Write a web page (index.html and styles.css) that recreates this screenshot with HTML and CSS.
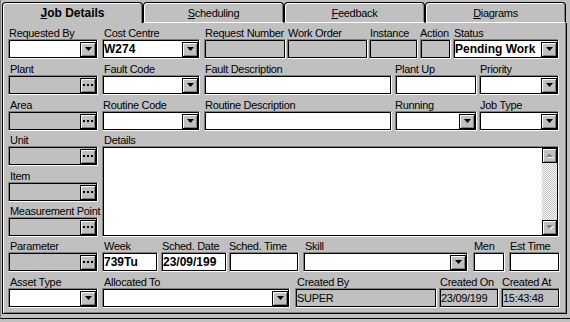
FILE: index.html
```html
<!DOCTYPE html>
<html lang="en">
<head>
  <meta charset="UTF-8" />
  <title>Job Details</title>
  <link rel="stylesheet" href="styles.css">
</head>
<body>
  <div class="frame">
    <div class="tabs">
      <div class="tab active"><u>J</u>ob Details</div>
      <div class="tab"><u>S</u>cheduling</div>
      <div class="tab"><u>F</u>eedback</div>
      <div class="tab"><u>D</u>iagrams</div>
    </div>

    <div class="panel">
      <!-- row 1 -->
      <div class="row r1">
        <div class="cell w90"><label>Requested By</label>
          <div class="fld"><span class="txt"></span><span class="btn"><svg width="7" height="4"><polygon points="0,0 7,0 3.5,4"/></svg></span></div>
        </div>
        <div class="cell w98 g4"><label class="in2">Cost Centre</label>
          <div class="fld"><span class="txt b">W274</span><span class="btn"><svg width="7" height="4"><polygon points="0,0 7,0 3.5,4"/></svg></span></div>
        </div>
        <div class="cell w82 g4"><label>Request Number</label><div class="fld ro"></div></div>
        <div class="cell w81 g1"><label>Work Order</label><div class="fld ro"></div></div>
        <div class="cell w49 g1"><label>Instance</label><div class="fld ro"></div></div>
        <div class="cell w31 g2"><label class="in0">Action</label><div class="fld ro"></div></div>
        <div class="cell w106 g2"><label>Status</label>
          <div class="fld"><span class="txt b">Pending Work</span><span class="btn"><svg width="7" height="4"><polygon points="0,0 7,0 3.5,4"/></svg></span></div>
        </div>
      </div>

      <!-- row 2 -->
      <div class="row r2">
        <div class="cell w90"><label class="in2">Plant</label>
          <div class="fld ro"><span class="txt"></span><span class="btn"><svg width="10" height="2"><rect x="0" width="2" height="2"/><rect x="4" width="2" height="2"/><rect x="8" width="2" height="2"/></svg></span></div>
        </div>
        <div class="cell w98 g4"><label class="in2">Fault Code</label>
          <div class="fld"><span class="txt"></span><span class="btn"><svg width="7" height="4"><polygon points="0,0 7,0 3.5,4"/></svg></span></div>
        </div>
        <div class="cell w188 g4"><label>Fault Description</label><div class="fld"></div></div>
        <div class="cell w82 g3"><label class="in0">Plant Up</label><div class="fld"></div></div>
        <div class="cell w80 g2"><label>Priority</label>
          <div class="fld"><span class="txt"></span><span class="btn"><svg width="7" height="4"><polygon points="0,0 7,0 3.5,4"/></svg></span></div>
        </div>
      </div>

      <!-- row 3 -->
      <div class="row r3">
        <div class="cell w90"><label class="in2">Area</label>
          <div class="fld ro"><span class="txt"></span><span class="btn"><svg width="10" height="2"><rect x="0" width="2" height="2"/><rect x="4" width="2" height="2"/><rect x="8" width="2" height="2"/></svg></span></div>
        </div>
        <div class="cell w98 g4"><label>Routine Code</label>
          <div class="fld"><span class="txt"></span><span class="btn"><svg width="7" height="4"><polygon points="0,0 7,0 3.5,4"/></svg></span></div>
        </div>
        <div class="cell w188 g4"><label>Routine Description</label><div class="fld"></div></div>
        <div class="cell w82 g3"><label class="in0">Running</label>
          <div class="fld"><span class="txt"></span><span class="btn"><svg width="7" height="4"><polygon points="0,0 7,0 3.5,4"/></svg></span></div>
        </div>
        <div class="cell w80 g2"><label>Job Type</label>
          <div class="fld"><span class="txt"></span><span class="btn"><svg width="7" height="4"><polygon points="0,0 7,0 3.5,4"/></svg></span></div>
        </div>
      </div>

      <!-- unit / item / point + details -->
      <div class="mid">
        <div class="side">
          <div class="cell unit"><label class="in2">Unit</label>
            <div class="fld ro"><span class="txt"></span><span class="btn"><svg width="10" height="2"><rect x="0" width="2" height="2"/><rect x="4" width="2" height="2"/><rect x="8" width="2" height="2"/></svg></span></div>
          </div>
          <div class="cell item"><label class="in2">Item</label>
            <div class="fld ro"><span class="txt"></span><span class="btn"><svg width="10" height="2"><rect x="0" width="2" height="2"/><rect x="4" width="2" height="2"/><rect x="8" width="2" height="2"/></svg></span></div>
          </div>
          <div class="cell"><label class="in2">Measurement Point</label>
            <div class="fld ro"><span class="txt"></span><span class="btn"><svg width="10" height="2"><rect x="0" width="2" height="2"/><rect x="4" width="2" height="2"/><rect x="8" width="2" height="2"/></svg></span></div>
          </div>
        </div>
        <div class="cell w457 g4"><label class="in2">Details</label>
          <div class="fld memo">
            <div class="memo-text"></div>
            <div class="sb">
              <span class="sb-btn"><svg width="8" height="5"><polygon points="1,5 8,5 4.5,1.5" fill="#fff"/><polygon points="0,4 7,4 3.5,0.5" fill="#808080"/></svg></span>
              <span class="sb-track"></span>
              <span class="sb-btn"><svg width="8" height="5"><polygon points="1,1 8,1 4.5,5" fill="#fff"/><polygon points="0,0 7,0 3.5,4" fill="#808080"/></svg></span>
            </div>
          </div>
        </div>
      </div>

      <!-- row 7 -->
      <div class="row r7">
        <div class="cell w90"><label class="in2">Parameter</label>
          <div class="fld ro"><span class="txt"></span><span class="btn"><svg width="10" height="2"><rect x="0" width="2" height="2"/><rect x="4" width="2" height="2"/><rect x="8" width="2" height="2"/></svg></span></div>
        </div>
        <div class="cell w56 g4"><label class="in2">Week</label><div class="fld"><span class="txt b">739Tu</span></div></div>
        <div class="cell w66 g3"><label>Sched. Date</label><div class="fld"><span class="txt b">23/09/199</span></div></div>
        <div class="cell w70 g2"><label class="in0">Sched. Time</label><div class="fld"></div></div>
        <div class="cell w165 g4"><label class="in2">Skill</label>
          <div class="fld"><span class="txt"></span><span class="btn"><svg width="7" height="4"><polygon points="0,0 7,0 3.5,4"/></svg></span></div>
        </div>
        <div class="cell w32 g5"><label>Men</label><div class="fld"></div></div>
        <div class="cell w51 g4"><label>Est Time</label><div class="fld"></div></div>
      </div>

      <!-- row 8 -->
      <div class="row r8">
        <div class="cell w90"><label class="in2">Asset Type</label>
          <div class="fld"><span class="txt"></span><span class="btn"><svg width="7" height="4"><polygon points="0,0 7,0 3.5,4"/></svg></span></div>
        </div>
        <div class="cell w188 g4"><label class="in2">Allocated To</label>
          <div class="fld"><span class="txt"></span><span class="btn"><svg width="7" height="4"><polygon points="0,0 7,0 3.5,4"/></svg></span></div>
        </div>
        <div class="cell w142 g5"><label class="in2">Created By</label><div class="fld ro"><span class="txt">SUPER</span></div></div>
        <div class="cell w60 g2"><label>Created On</label><div class="fld ro"><span class="txt">23/09/199</span></div></div>
        <div class="cell w59 g2"><label>Created At</label><div class="fld ro"><span class="txt">15:43:48</span></div></div>
      </div>
    </div>
  </div>
</body>
</html>
```

FILE: styles.css
```css
body {
  margin: 0;
  background: #c0c0c0;
  font-family: "Liberation Sans", Arial, sans-serif;
  font-size: 11px;
  letter-spacing: -0.3px;
  color: #000;
}
.frame {
  width: 569px;
  height: 318px;
  border-left: 1px solid #808080;
  border-bottom: 1px solid #000;
}

/* tab strip */
.tabs {
  display: flex;
  height: 21px;
  padding: 2px 0 0 1px;
}
.tab {
  width: 141px;
  box-sizing: border-box;
  border: 1px solid #000;
  border-bottom: 1px solid #fff;
  border-radius: 4px 4px 0 0;
  box-shadow: inset 1px 1px #fff, inset -1px 0 #808080;
  text-align: center;
  padding-top: 1px;
  line-height: 18px;
}
.tab.active {
  border-bottom: none;
  font-weight: bold;
  font-size: 12px;
  letter-spacing: 0;
}

/* main panel */
.panel {
  margin-left: 1px;
  width: 565px;
  height: 291px;
  box-sizing: border-box;
  border: 1px solid #000;
  border-top: none;
  box-shadow: inset 1px 0 #fff, inset -1px -1px #808080;
  padding: 2px 0 0 5px;
}
.row { display: flex; }
.r1, .r2, .r7 { margin-bottom: 2px; }
.r3 { margin-bottom: 1px; }
.mid { display: flex; margin-bottom: 1px; }
.side { width: 90px; flex: none; }
.unit { margin-bottom: 2px; }
.item { margin-bottom: 1px; }

.cell { flex: none; }
.cell label {
  display: block;
  height: 14px;
  line-height: 17px;
  padding-left: 1px;
  white-space: nowrap;
}
.cell label.in2 { padding-left: 2px; }
.cell label.in0 { padding-left: 0; }

/* widths and gaps */
.w31 { width: 31px; }
.w32 { width: 32px; }
.w49 { width: 49px; }
.w51 { width: 51px; }
.w56 { width: 56px; }
.w59 { width: 59px; }
.w60 { width: 60px; }
.w66 { width: 66px; }
.w70 { width: 70px; }
.w80 { width: 80px; }
.w81 { width: 81px; }
.w82 { width: 82px; }
.w90 { width: 90px; }
.w98 { width: 98px; }
.w106 { width: 106px; }
.w142 { width: 142px; }
.w165 { width: 165px; }
.w188 { width: 188px; }
.w457 { width: 457px; }
.g1 { margin-left: 1px; }
.g2 { margin-left: 2px; }
.g3 { margin-left: 3px; }
.g4 { margin-left: 4px; }
.g5 { margin-left: 5px; }

/* sunken edit box */
.fld {
  height: 20px;
  box-sizing: border-box;
  border: 1px solid;
  border-color: #808080 #fff #fff #808080;
  box-shadow: inset 0 0 0 1px #000;
  background: #fff;
  display: flex;
  align-items: center;
  overflow: hidden;
}
.fld.ro { background: #c0c0c0; }
.txt {
  flex: 1;
  padding-left: 1px;
  white-space: nowrap;
  overflow: hidden;
}
.b {
  font-weight: bold;
  font-size: 12px;
  letter-spacing: 0;
}

/* small raised button inside a field */
.btn {
  flex: none;
  margin: 0 1px 0 auto;
  width: 16px;
  height: 15px;
  box-sizing: border-box;
  border: 1px solid #000;
  box-shadow: inset 1px 1px #fff, inset -1px -1px #808080;
  background: #c0c0c0;
  display: flex;
  align-items: center;
  justify-content: center;
}
.btn svg { display: block; }

/* details memo */
.fld.memo {
  height: 91px;
  align-items: stretch;
  padding: 1px;
}
.memo-text { flex: 1; }
.sb {
  width: 15px;
  display: flex;
  flex-direction: column;
}
.sb-btn {
  height: 15px;
  box-sizing: border-box;
  border: 1px solid #000;
  box-shadow: inset 1px 1px #fff, inset -1px -1px #808080;
  background: #c0c0c0;
  display: flex;
  align-items: center;
  justify-content: center;
}
.sb-btn svg { display: block; }
.sb-track {
  flex: 1;
  background: repeating-conic-gradient(#c0c0c0 0 25%, #fff 0 50%) 0 0 / 2px 2px;
}
```
